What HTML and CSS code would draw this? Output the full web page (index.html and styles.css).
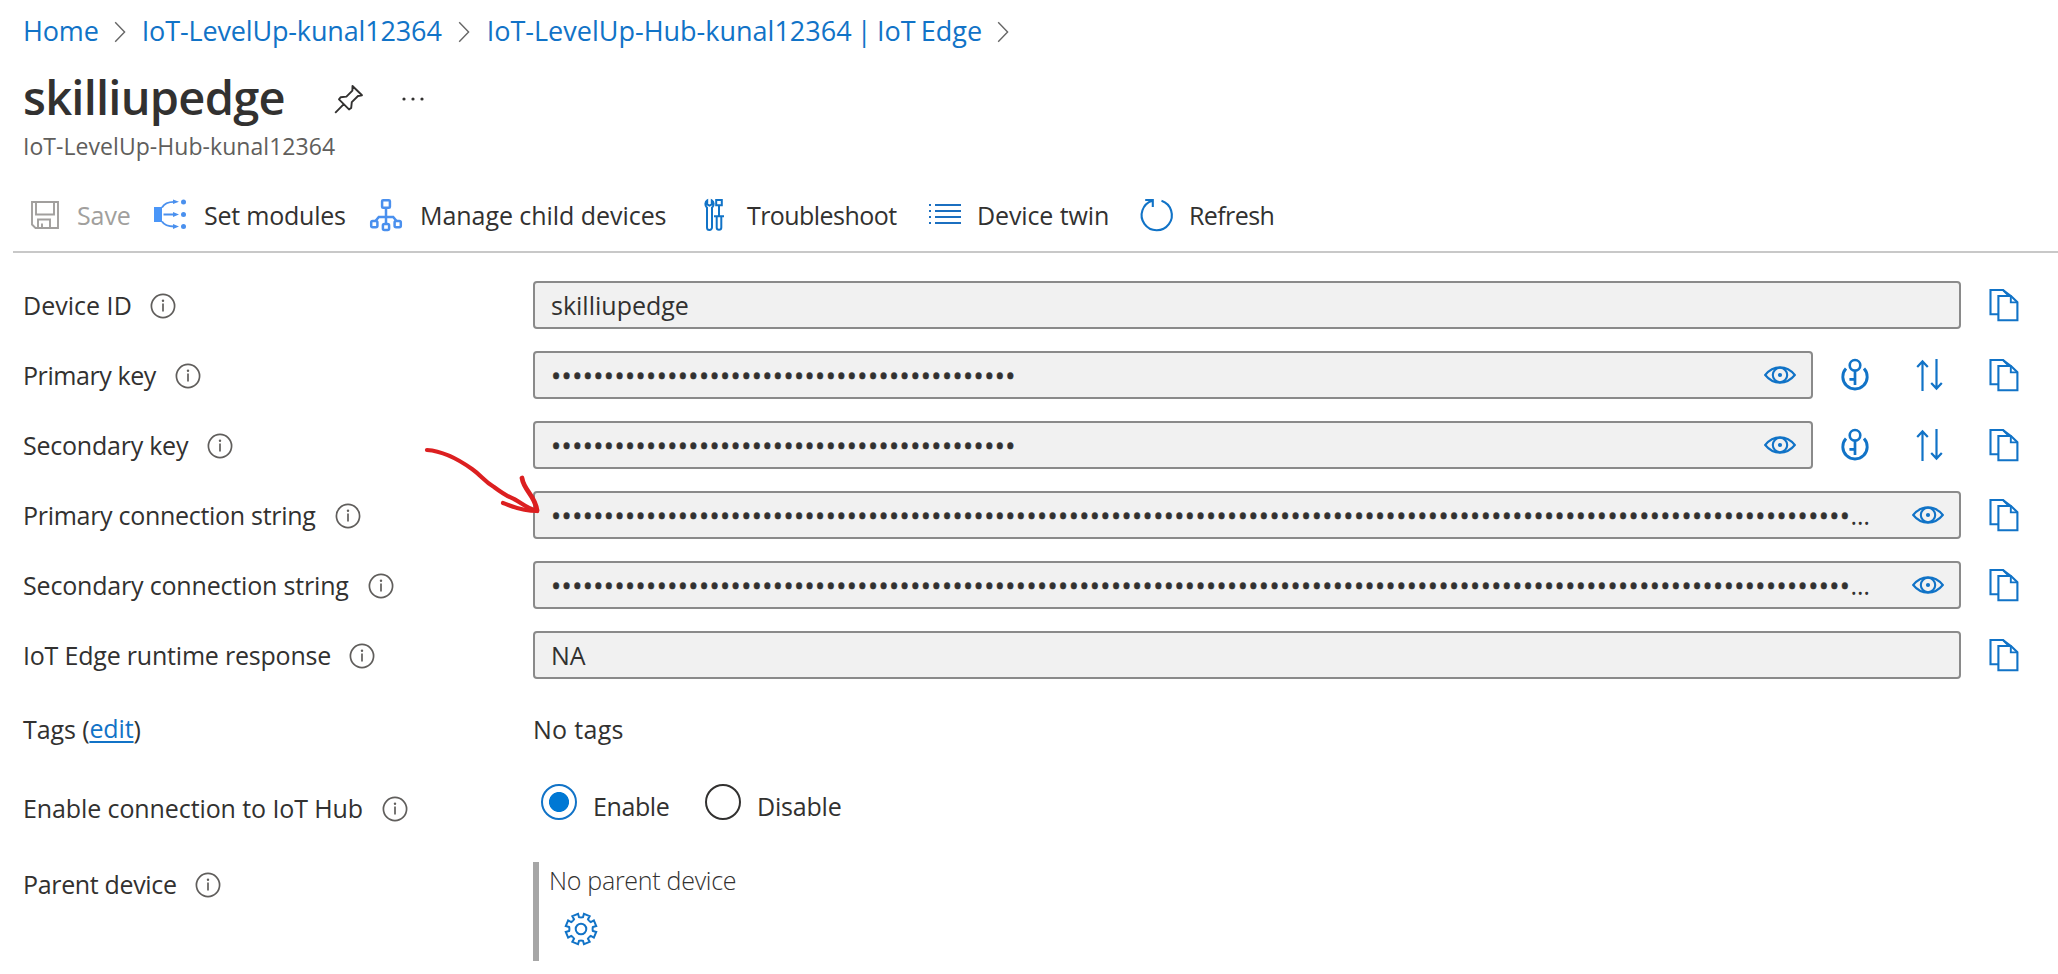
FILE: index.html
```
<!DOCTYPE html>
<html lang="en">
<head>
<meta charset="utf-8">
<title>skilliupedge</title>
<link rel="stylesheet" href="styles.css">
</head>
<body>
<svg class="sprite" aria-hidden="true">
  <symbol id="chevron" viewBox="0 0 12 22"><path d="M1.2 1.2 10.6 11 1.2 20.8" fill="none" stroke="#666" stroke-width="1.4"/></symbol>
  <symbol id="info" viewBox="0 0 26 26"><circle cx="13" cy="13" r="11.6" fill="none" stroke="#605e5c" stroke-width="1.7"/><path d="M13 10.500v8" stroke="#605e5c" stroke-width="1.7"/><circle cx="13" cy="7.700" r="1.200" fill="#605e5c"/></symbol>
  <symbol id="copy" viewBox="0 0 30 34"><g fill="none" stroke="#1173c7" stroke-width="2.100"><path d="M9 26.200H1.500V2H14l6 6"/><path d="M9.400 8H22l6.400 6.200v18H9.400z"/><path d="M21.800 8v6.400h6.600M14 2l8 6" stroke-width="1.900"/></g></symbol>
  <symbol id="eye" viewBox="0 0 32 18"><g fill="none" stroke="#1173c7" stroke-width="2.100"><path d="M1.200 9C5.200 4 10.200 1.400 16 1.400S26.800 4 30.800 9C26.800 14 21.800 16.600 16 16.600S5.200 14 1.200 9z"/><circle cx="16" cy="9" r="7.200"/></g><circle cx="16" cy="9" r="2.100" fill="#1173c7"/></symbol>
  <symbol id="key" viewBox="0 0 28 34"><g fill="none" stroke="#1173c7"><circle cx="14" cy="7.300" r="5.300" stroke-width="2.600"/><path d="M14 12.500V27M8.400 21.300H14" stroke-width="2.700"/><path d="M5 10.500A12.200 12.200 0 1 0 23 10.500" stroke-width="2.900"/></g></symbol>
  <symbol id="swap" viewBox="0 0 28 34"><g fill="none" stroke="#1173c7" stroke-width="2.200"><path d="M6.500 33V3.500M1.200 9l5.300-5.600L11.800 9M20.500 1v29.500M15.200 25l5.300 5.600 5.300-5.600"/></g></symbol>
</svg>

<nav class="crumbs">
  <a class="crumb">Home</a><svg class="chevron chevron-a"><use href="#chevron"/></svg>
  <a class="crumb">IoT-LevelUp-kunal12364</a><svg class="chevron chevron-b"><use href="#chevron"/></svg>
  <a class="crumb crumb-hub">IoT-LevelUp-Hub-kunal12364 | IoT Edge</a><svg class="chevron chevron-c"><use href="#chevron"/></svg>
</nav>

<header class="heading">
  <h1 class="title">skilliupedge</h1>
  <svg class="pin" viewBox="0 0 30 30"><path d="M18.500 2 28 11.200l-4 .8-6.200 6.200-.6 5.800-2.200 1.400L5 15.400l1.600-2.200 5.800-.6 6-6zM9.800 20.200 1.200 28.800" fill="none" stroke="#323130" stroke-width="1.9" stroke-linejoin="round"/></svg>
  <svg class="more" viewBox="0 0 24 6"><g fill="#323130"><circle cx="3" cy="3" r="1.600"/><circle cx="12" cy="3" r="1.600"/><circle cx="21" cy="3" r="1.600"/></g></svg>
</header>
<p class="subtitle">IoT-LevelUp-Hub-kunal12364</p>

<div class="toolbar">
  <div class="tool disabled">
    <svg class="tool-icon" viewBox="0 0 32 32"><g fill="none" stroke="#a19f9d" stroke-width="1.9"><path d="M3 3h26v26H6.500L3 25.500zM7 3v12.500h18V3M9 29v-8.500h12V29M13 29v-4.500"/></g></svg>
    <span class="t-save">Save</span>
  </div>
  <div class="tool wide">
    <svg class="tool-icon" viewBox="0 0 32 32"><path d="M0 8h8v15H0z" fill="#4a96f8"/><g fill="none" stroke="#4a90ee" stroke-width="1.800"><path d="M8 8.500C10.500 4 14 2.800 20 2.800M9.500 15.500H21M8 22.500C10.500 26.500 14 27.500 20 27.500"/></g><g fill="#4a90ee"><path d="m19 .5 6 2.300-6 2.300zM19 13l6 2.500-6 2.500zM19 25l6 2.500-6 2.500z"/><circle cx="29.500" cy="2.900" r="2.500"/><circle cx="29.500" cy="15.500" r="2.500"/><circle cx="29.500" cy="27.500" r="2.500"/></g></svg>
    <span class="t-set">Set modules</span>
  </div>
  <div class="tool wide">
    <svg class="tool-icon" viewBox="0 0 32 32"><g fill="none" stroke="#4a90ee" stroke-width="2.500"><rect x="12.100" y="1.200" width="7.800" height="7.500" rx="1"/><rect x="1.200" y="22" width="6.200" height="6.200" rx="1.500"/><rect x="12.900" y="25" width="6.200" height="6" rx="1.500"/><rect x="24.600" y="22" width="6.200" height="6.200" rx="1.500"/><path d="M16 9v16M5.500 22l3.300-4h14.400l3.300 4"/></g></svg>
    <span class="t-child">Manage child devices</span>
  </div>
  <div class="tool">
    <svg class="tool-icon" viewBox="0 0 32 32"><g fill="none" stroke="#1173c7" stroke-width="2"><path d="M8.200 1.400C6 2.600 5.600 6.500 8 8.800V28.500a2.300 2.300 0 0 0 5 0V8.800c2.400-2.300 2-6.200-.2-7.400v4.100l-2.300 1.200-2.300-1.200z"/><path d="M17.200 1h5.600v5.200h-5.600zM20 6.200V17M15 17.300h10M17.700 17.500v11a2.300 2.300 0 0 0 4.600 0v-11"/></g></svg>
    <span class="t-trouble">Troubleshoot</span>
  </div>
  <div class="tool">
    <svg class="tool-icon" viewBox="0 0 32 32"><path d="M6 6h26M6 12h26M6 18h26M6 24h26M0 6h2M0 12h2M0 18h2M0 24h2" stroke="#1b6fc0" stroke-width="2"/></svg>
    <span class="t-twin">Device twin</span>
  </div>
  <div class="tool">
    <svg class="tool-icon" viewBox="0 0 32 32"><path d="M20.500 1.800A15.100 15.100 0 1 1 11.300 1.700M4.200 1H11.800V8" fill="none" stroke="#1173c7" stroke-width="2.100"/></svg>
    <span class="t-refresh">Refresh</span>
  </div>
</div>

<main class="form">
  <div class="row">
    <div class="label"><span class="l-id">Device ID</span><svg class="info"><use href="#info"/></svg></div>
    <div class="field"><span>skilliupedge</span></div>
    <svg class="copy"><use href="#copy"/></svg>
  </div>
  <div class="row">
    <div class="label"><span class="l-pk">Primary key</span><svg class="info"><use href="#info"/></svg></div>
    <div class="field"><span class="dots">••••••••••••••••••••••••••••••••••••••••••••</span><svg class="eye"><use href="#eye"/></svg></div>
    <svg class="key"><use href="#key"/></svg>
    <svg class="swap"><use href="#swap"/></svg>
    <svg class="copy"><use href="#copy"/></svg>
  </div>
  <div class="row">
    <div class="label"><span class="l-sk">Secondary key</span><svg class="info"><use href="#info"/></svg></div>
    <div class="field"><span class="dots">••••••••••••••••••••••••••••••••••••••••••••</span><svg class="eye"><use href="#eye"/></svg></div>
    <svg class="key"><use href="#key"/></svg>
    <svg class="swap"><use href="#swap"/></svg>
    <svg class="copy"><use href="#copy"/></svg>
  </div>
  <div class="row">
    <div class="label"><span class="l-pcs">Primary connection string</span><svg class="info"><use href="#info"/></svg></div>
    <div class="field"><span class="dots">•••••••••••••••••••••••••••••••••••••••••••••••••••••••••••••••••••••••••••••••••••••••••••••••••••••••••••••••••••••••••••</span><span>…</span><svg class="eye"><use href="#eye"/></svg></div>
    <svg class="copy"><use href="#copy"/></svg>
  </div>
  <div class="row">
    <div class="label"><span class="l-scs">Secondary connection string</span><svg class="info"><use href="#info"/></svg></div>
    <div class="field"><span class="dots">•••••••••••••••••••••••••••••••••••••••••••••••••••••••••••••••••••••••••••••••••••••••••••••••••••••••••••••••••••••••••••</span><span>…</span><svg class="eye"><use href="#eye"/></svg></div>
    <svg class="copy"><use href="#copy"/></svg>
  </div>
  <div class="row">
    <div class="label"><span class="l-rr">IoT Edge runtime response</span><svg class="info"><use href="#info"/></svg></div>
    <div class="field"><span>NA</span></div>
    <svg class="copy"><use href="#copy"/></svg>
  </div>
  <div class="row tags">
    <div class="label"><span class="l-tags">Tags (<a class="edit">edit</a>)</span></div>
    <span class="no-tags">No tags</span>
  </div>
  <div class="row enable">
    <div class="label"><span class="l-hub">Enable connection to IoT Hub</span><svg class="info"><use href="#info"/></svg></div>
    <div class="radios">
      <i class="radio on"></i><span class="r-on">Enable</span>
      <i class="radio"></i><span class="r-off">Disable</span>
    </div>
  </div>
  <div class="row parent">
    <div class="label"><span class="l-parent">Parent device</span><svg class="info"><use href="#info"/></svg></div>
    <div class="parent-box">
      <span class="no-parent">No parent device</span>
      <svg class="gear" viewBox="-17 -17 34 34"><g fill="none" stroke="#1173c7" stroke-width="2">
        <circle r="5.300"/>
        <path id="tooth" transform="rotate(22.500)" d="M-4.400-10.600-2.700-11.700-3.100-15.200H3.100L2.700-11.700 4.400-10.600"/>
        <use href="#tooth" transform="rotate(45)"/><use href="#tooth" transform="rotate(90)"/><use href="#tooth" transform="rotate(135)"/><use href="#tooth" transform="rotate(180)"/><use href="#tooth" transform="rotate(225)"/><use href="#tooth" transform="rotate(270)"/><use href="#tooth" transform="rotate(315)"/>
      </g></svg>
    </div>
  </div>
</main>

<svg class="annotation" viewBox="0 0 120 72"><g fill="none" stroke="#dc1f20" stroke-width="4.200" stroke-linecap="round" stroke-linejoin="round"><path d="M5 5C20 6 36 14 50 24C60 31 62 36 72 42C80 48 84 51 92 54C100 58 104 63 115 66"/><path d="M100 33C102 46 113 50 115 65.500" stroke-width="4.800"/><path d="M81 58C90 61 98 66 115 66"/></g></svg>
</body>
</html>
```
FILE: styles.css
```
* { box-sizing: border-box; }
body {
  margin: 0;
  width: 2058px;
  height: 974px;
  overflow: hidden;
  position: relative;
  background: #fff;
  color: #323130;
  font: 25px/48px "Open Sans", sans-serif;
  white-space: nowrap;
}
svg { display: block; flex: none; }
.sprite { position: absolute; width: 0; height: 0; }

.crumbs { display: flex; align-items: center; height: 61px; padding-left: 23px; font-size: 27px; letter-spacing: -0.15px; color: #1173c7; }
.crumb-hub { letter-spacing: 0; word-spacing: -1.8px; }
.chevron { width: 12px; height: 22px; margin-top: 3px; }
.chevron-a { margin: 3px 16px 0 15px; }
.chevron-b { margin: 3px 17px 0 16px; }
.chevron-c { margin-left: 15px; }

.heading { display: flex; align-items: center; height: 71px; padding-left: 23px; }
.title { margin: 0; width: 311px; font-size: 47px; font-weight: 600; letter-spacing: -0.75px; }
.pin { width: 30px; height: 30px; margin-top: 5px; }
.more { width: 24px; height: 6px; margin: 5px 0 0 37px; }
.subtitle { margin: 0; padding-left: 23px; height: 28px; line-height: 28px; font-size: 23px; letter-spacing: 0.05px; color: #605e5c; }

.toolbar {
  display: grid;
  grid-template-columns: 125px 216px 329px 230px 212px auto;
  align-items: center;
  height: 93px;
  margin-left: 13px;
  padding: 19px 0 0 16px;
  border-bottom: 2px solid #c8c8c8;
}
.tool { display: flex; align-items: center; gap: 16px; }
.wide { gap: 18px; }
.disabled { color: #a19f9d; }
.tool-icon { width: 32px; height: 32px; overflow: visible; }
.t-save { letter-spacing: -0.1px; }
.t-set { letter-spacing: -0.22px; }
.t-child { letter-spacing: -0.05px; }
.t-trouble { letter-spacing: -0.56px; }
.t-twin { letter-spacing: -0.12px; }
.t-refresh { letter-spacing: -0.6px; }

.form { display: flex; flex-direction: column; gap: 22px; padding: 28px 39px 0 23px; }
.row { display: flex; align-items: center; height: 48px; }
.label { display: flex; align-items: center; flex: none; width: 510px; }
.info { width: 26px; height: 26px; margin: 2px 0 0 19px; }
.l-id { margin-right: -1px; letter-spacing: 0.02px; }
.l-pk { letter-spacing: -0.42px; }
.l-sk { letter-spacing: -0.23px; }
.l-pcs { letter-spacing: -0.29px; }
.l-scs { letter-spacing: -0.18px; }
.l-rr { margin-right: -1px; letter-spacing: -0.2px; }
.l-tags { letter-spacing: -0.1px; }
.l-hub { letter-spacing: -0.1px; }
.l-parent { margin-right: -1px; letter-spacing: -0.34px; }

.field { display: flex; align-items: center; flex: 1; height: 48px; padding: 0 15px 0 16px; border: 2px solid #8a8a8a; border-radius: 4px; background: #f1f1f1; line-height: 44px; }
.dots { padding-top: 2px; font-size: 27px; letter-spacing: 0.413px; -webkit-text-stroke: 0.5px #323130; }
.eye { width: 32px; height: 18px; margin-left: auto; }
.key { width: 28px; height: 34px; margin-left: 28px; }
.swap { width: 28px; height: 34px; margin-left: 47px; }
.copy { width: 30px; height: 34px; margin-left: 28px; }
.swap + .copy { margin-left: 45px; }

.tags { margin-top: 4px; }
.edit { position: relative; top: -1px; color: #1173c7; text-decoration: underline; text-decoration-thickness: 2px; text-underline-offset: 3px; }
.no-tags { letter-spacing: 0.3px; }

.enable { margin-top: 9px; }
.radios { display: flex; align-items: center; margin: -4px 0 0 8px; }
.radio { display: flex; flex: none; width: 36px; height: 36px; margin-top: -9px; border: 2px solid #323130; border-radius: 50%; }
.on { border-color: #1173c7; background: radial-gradient(circle, #0078d4 9.6px, transparent 10.4px); }
.r-on { width: 112px; margin-left: 16px; letter-spacing: -0.4px; }
.r-off { margin-left: 16px; letter-spacing: -0.2px; }

.parent { height: 99px; margin-top: 8px; align-items: flex-start; }
.parent .label { margin-top: -2px; }
.parent-box { display: flex; flex-direction: column; height: 99px; padding-left: 10px; border-left: 6px solid #a6a6a6; }
.no-parent { height: 36px; line-height: 36px; font-weight: 300; letter-spacing: -0.28px; }
.gear { width: 34px; height: 34px; margin: 14px 0 0 15px; }

.annotation { position: absolute; left: 422px; top: 445px; width: 120px; height: 72px; }
```
